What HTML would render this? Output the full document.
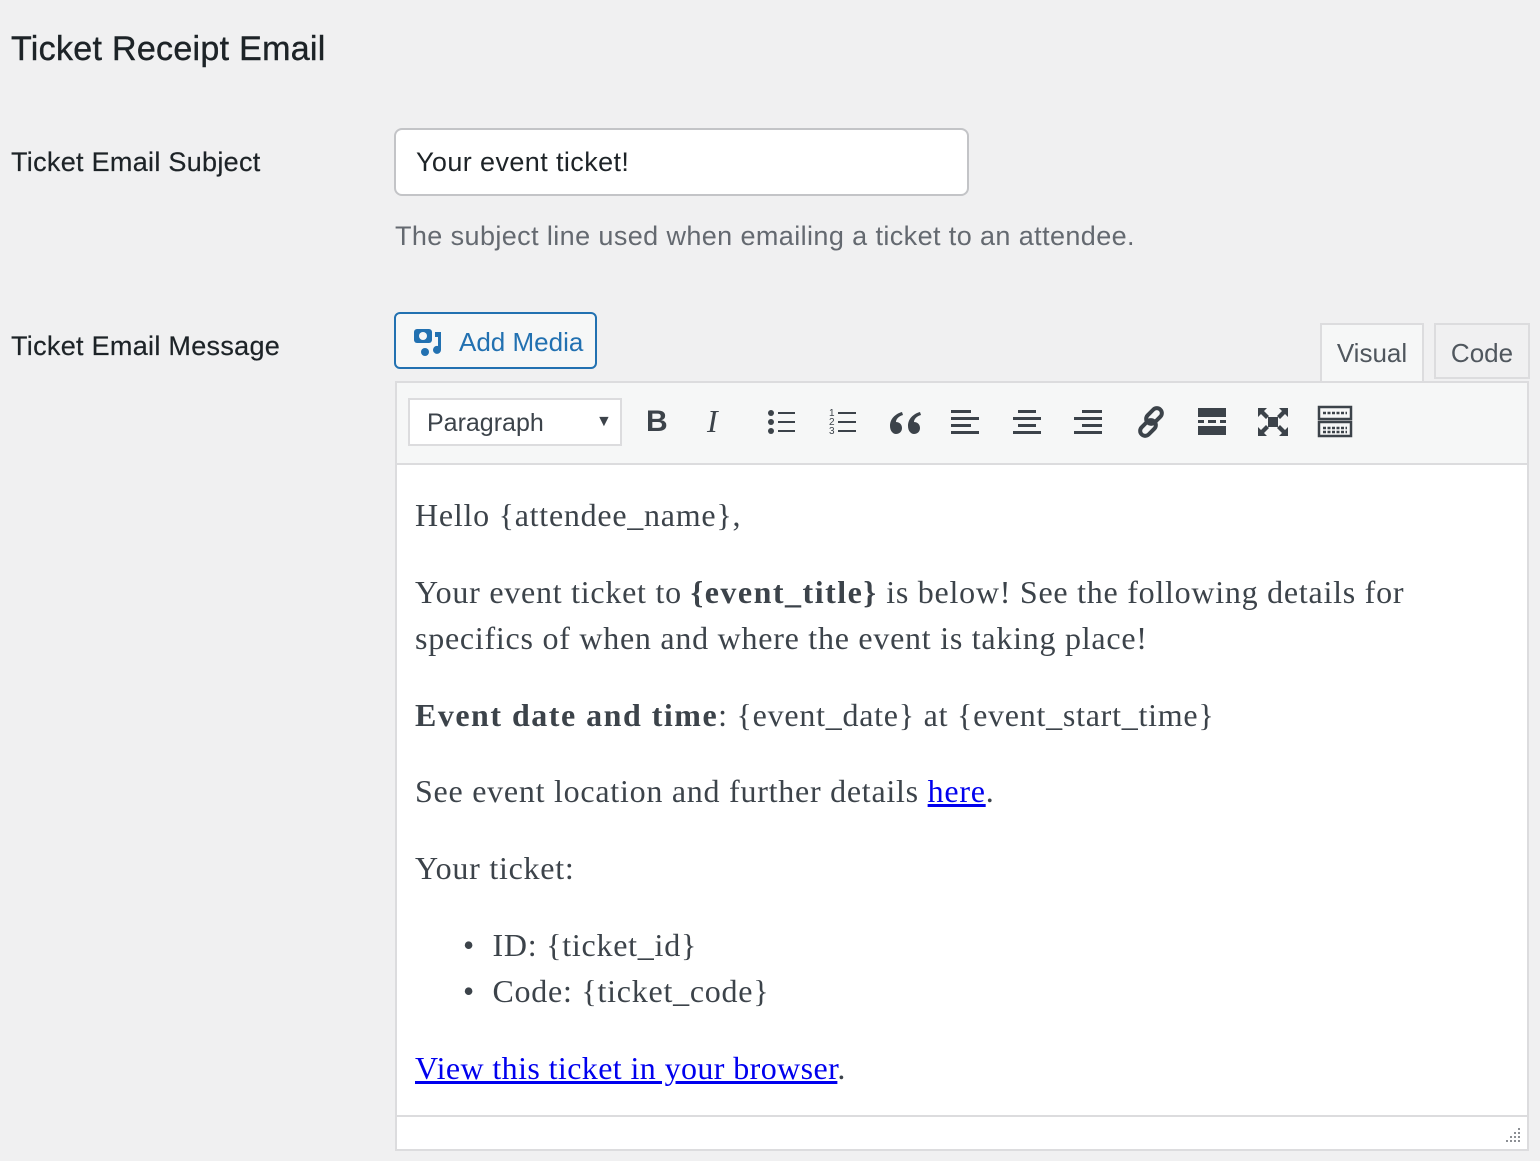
<!DOCTYPE html>
<html><head><meta charset="utf-8"><style>
body{margin:0;width:1540px;height:1161px;background:#f0f0f1;font-family:"Liberation Sans",sans-serif;color:#1d2327;position:relative;overflow:hidden}
.a{position:absolute}
h1{position:absolute;left:11px;top:30px;margin:0;font-size:34px;font-weight:normal;color:#1d2327;letter-spacing:0.3px;-webkit-text-stroke:0.4px #1d2327}
.lbl{position:absolute;left:11px;font-size:27px;letter-spacing:0.3px;color:#1d2327;-webkit-text-stroke:0.2px #1d2327}
.inp{left:394px;top:128px;width:575px;height:68px;border:2px solid #c3c4c7;border-radius:8px;background:#fff;box-sizing:border-box;font-size:27px;letter-spacing:0.4px;padding:17px 20px}
.desc{left:395px;top:221px;font-size:27px;letter-spacing:0.4px;color:#646970}
.btn{left:394px;top:312px;width:203px;height:57px;border:2px solid #2271b1;border-radius:6px;box-sizing:border-box;background:#f6f7f7;color:#2271b1;font-size:26px}
.tab{top:323px;height:56px;border:2px solid #dcdcde;box-sizing:border-box;font-size:26px;color:#50575e;padding-top:13px;text-align:center;background:#f6f7f7}
.ed{left:395px;top:381px;width:1134px;height:770px;border:2px solid #dcdcde;box-sizing:border-box;background:#fff}
.tb{left:0;top:0;width:1130px;height:80px;background:#f6f7f7;border-bottom:2px solid #dcdcde}
.sel{left:11px;top:15px;width:214px;height:48px;background:#fff;border:2px solid #dcdcde;box-sizing:border-box;font-size:25px;color:#3c434a;padding:9px 17px}
.ct{font-family:"Liberation Serif",serif;font-size:32px;letter-spacing:0.75px;color:#3c434a;position:absolute;left:18px;line-height:46px}
.ct b{letter-spacing:1.5px}
a{color:#0000ee;text-decoration:underline}
.ic{position:absolute;top:22px}
</style></head><body>
<h1>Ticket Receipt Email</h1>
<div class="lbl" style="top:147px">Ticket Email Subject</div>
<div class="a inp">Your event ticket!</div>
<div class="a desc">The subject line used when emailing a ticket to an attendee.</div>
<div class="lbl" style="top:331px">Ticket Email Message</div>
<div class="a btn"><svg class="a" style="left:17px;top:12px" width="32" height="32" viewBox="0 0 32 32" fill="#2271b1"><rect x="1" y="3" width="18" height="14" rx="3"/><circle cx="10" cy="10" r="4" fill="#f6f7f7"/><path d="M22 6h6v18a4 4 0 1 1-3-4V11h-3z"/><circle cx="12" cy="26" r="4"/></svg><span class="a" style="left:63px;top:13px">Add Media</span></div>
<div class="a tab" style="left:1320px;width:104px;background:#f6f7f7;border-bottom:none;height:58px">Visual</div>
<div class="a tab" style="left:1434px;width:96px;background:#f0f0f1">Code</div>
<div class="a ed">
<div class="a tb">
<div class="a sel">Paragraph<span class="a" style="left:186px;top:13px;font-size:16px">▼</span></div>
<div class="ic" style="left:249px;font:bold 30px 'Liberation Sans';top:22px;color:#3c434a">B</div>
<div class="ic" style="left:310px;font:italic 32px 'Liberation Serif';top:20px;color:#3c434a">I</div>
<svg class="ic" style="left:370px" width="30" height="34" viewBox="0 0 30 34" fill="#3c434a"><circle cx="4" cy="8" r="3"/><circle cx="4" cy="17" r="3"/><circle cx="4" cy="26" r="3"/><rect x="11" y="7" width="17" height="2"/><rect x="11" y="16" width="17" height="2"/><rect x="11" y="25" width="17" height="2"/></svg>
<svg class="ic" style="left:432px" width="30" height="34" viewBox="0 0 30 34" fill="#3c434a"><text x="0" y="11" font-size="10" font-family="Liberation Sans">1</text><text x="0" y="20" font-size="10" font-family="Liberation Sans">2</text><text x="0" y="29" font-size="10" font-family="Liberation Sans">3</text><rect x="9" y="7" width="18" height="2"/><rect x="9" y="16" width="18" height="2"/><rect x="9" y="25" width="18" height="2"/></svg>
<svg class="ic" style="left:492px;top:27px" width="32" height="26" viewBox="0 0 32 26" fill="#3c434a"><path d="M13 2C6 4 1 9 1 16c0 5 3 8 6 8s6-2 6-6-3-6-6-6c0-3 3-6 7-7zM31 2c-7 2-12 7-12 14 0 5 3 8 6 8s6-2 6-6-3-6-6-6c0-3 3-6 7-7z"/></svg>
<svg class="ic" style="left:553px" width="30" height="34" viewBox="0 0 30 34" fill="#3c434a"><rect x="1" y="5" width="20" height="3"/><rect x="1" y="12" width="28" height="3"/><rect x="1" y="19" width="20" height="3"/><rect x="1" y="26" width="28" height="3"/></svg>
<svg class="ic" style="left:615px" width="30" height="34" viewBox="0 0 30 34" fill="#3c434a"><rect x="6" y="5" width="18" height="3"/><rect x="1" y="12" width="28" height="3"/><rect x="6" y="19" width="18" height="3"/><rect x="1" y="26" width="28" height="3"/></svg>
<svg class="ic" style="left:676px" width="30" height="34" viewBox="0 0 30 34" fill="#3c434a"><rect x="9" y="5" width="20" height="3"/><rect x="1" y="12" width="28" height="3"/><rect x="9" y="19" width="20" height="3"/><rect x="1" y="26" width="28" height="3"/></svg>
<svg class="ic" style="left:737px" width="34" height="34" viewBox="0 0 34 34" fill="none" stroke="#3c434a" stroke-width="4"><rect x="15" y="2" width="10" height="18" rx="5" transform="rotate(45 20 11)"/><rect x="9" y="14" width="10" height="18" rx="5" transform="rotate(45 14 23)"/></svg>
<svg class="ic" style="left:800px" width="30" height="34" viewBox="0 0 30 34" fill="#3c434a"><rect x="1" y="3" width="28" height="9"/><rect x="1" y="15" width="6" height="3"/><rect x="11" y="15" width="8" height="3"/><rect x="23" y="15" width="6" height="3"/><rect x="1" y="21" width="28" height="9"/></svg>
<svg class="ic" style="left:860px" width="32" height="34" viewBox="0 0 32 34" fill="#3c434a"><path d="M1 3h9l-3 3 5 5-3 3-5-5-3 3zM31 3h-9l3 3-5 5 3 3 5-5 3 3zM1 31h9l-3-3 5-5-3-3-5 5-3-3zM31 31h-9l3-3-5-5 3-3 5 5 3-3z"/><rect x="11" y="12" width="10" height="10"/></svg>
<svg class="ic" style="left:920px" width="36" height="34" viewBox="0 0 36 34" fill="none" stroke="#3c434a" stroke-width="2.5"><rect x="2" y="2" width="32" height="12"/><rect x="2" y="17" width="32" height="14"/><path d="M6 8h24M6 23h24M6 27h24" stroke-dasharray="3 1.5"/></svg>
</div>
<div class="ct" style="top:109px">Hello {attendee_name},</div>
<div class="ct" style="top:186px">Your event ticket to <b>{event_title}</b> is below! See the following details for<br>specifics of when and where the event is taking place!</div>
<div class="ct" style="top:309px"><b>Event date and time</b>: {event_date} at {event_start_time}</div>
<div class="ct" style="top:385px">See event location and further details <a>here</a>.</div>
<div class="ct" style="top:462px">Your ticket:</div>
<div class="ct" style="top:539px;left:66px">•&nbsp; ID: {ticket_id}<br>•&nbsp; Code: {ticket_code}</div>
<div class="ct" style="top:662px;letter-spacing:0.4px"><a>View this ticket in your browser</a>.</div>
<div class="a" style="left:0;top:732px;width:1130px;height:2px;background:#dcdcde"></div>
<svg class="a" style="left:1108px;top:744px" width="16" height="16" viewBox="0 0 16 16" fill="#8c8f94"><rect x="13" y="1" width="2" height="2"/><rect x="13" y="5" width="2" height="2"/><rect x="9" y="5" width="2" height="2"/><rect x="13" y="9" width="2" height="2"/><rect x="9" y="9" width="2" height="2"/><rect x="5" y="9" width="2" height="2"/><rect x="13" y="13" width="2" height="2"/><rect x="9" y="13" width="2" height="2"/><rect x="5" y="13" width="2" height="2"/><rect x="1" y="13" width="2" height="2"/></svg>
</div>
</body></html>
